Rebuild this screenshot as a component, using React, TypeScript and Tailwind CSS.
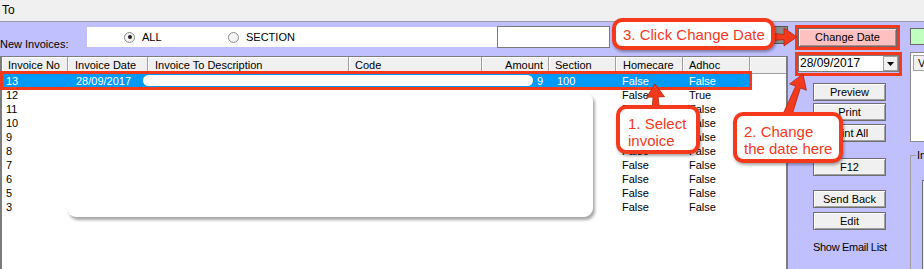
import React from 'react';

const RED = '#f5391c';

const cols = [
    { title: 'Invoice No', w: 'w-[66px]', pad: 'pl-[6px]' },
    { title: 'Invoice Date', w: 'w-[80px]', pad: 'pl-[7px]' },
    { title: 'Invoice To Description', w: 'w-[201px]', pad: 'pl-[7px]' },
    { title: 'Code', w: 'w-[133px]', pad: 'pl-[6px]' },
    { title: 'Amount', w: 'w-[67px]', pad: 'pr-[5px] justify-end' },
    { title: 'Section', w: 'w-[67px]', pad: 'pl-[6px]' },
    { title: 'Homecare', w: 'w-[67px]', pad: 'pl-[7px]' },
    { title: 'Adhoc', w: 'w-[67px]', pad: 'pl-[6px]' },
];

const rows = [
    { no: '13', date: '28/09/2017', amount: '9', section: '100', home: 'False', adhoc: 'False', sel: true },
    { no: '12', home: 'False', adhoc: 'True' },
    { no: '11', home: 'False', adhoc: 'False' },
    { no: '10', home: 'False', adhoc: 'False' },
    { no: '9', home: 'False', adhoc: 'False' },
    { no: '8', home: 'False', adhoc: 'False' },
    { no: '7', home: 'False', adhoc: 'False' },
    { no: '6', home: 'False', adhoc: 'False' },
    { no: '5', home: 'False', adhoc: 'False' },
    { no: '3', home: 'False', adhoc: 'False' },
];

// tapered arrow polygon from base to tip
function arrowPoints(bx: number, by: number, tx: number, ty: number, ws: number, wt: number, wh: number, hl: number) {
    const len = Math.hypot(tx - bx, ty - by);
    const dx = (tx - bx) / len;
    const dy = (ty - by) / len;
    const nx = -dy;
    const ny = dx;
    const kx = tx - dx * hl;
    const ky = ty - dy * hl;
    const p = (x: number, y: number) => `${x.toFixed(1)},${y.toFixed(1)}`;
    return [
        p(bx + nx * ws / 2, by + ny * ws / 2),
        p(kx + nx * wt / 2, ky + ny * wt / 2),
        p(kx + nx * wh / 2, ky + ny * wh / 2),
        p(tx, ty),
        p(kx - nx * wh / 2, ky - ny * wh / 2),
        p(kx - nx * wt / 2, ky - ny * wt / 2),
        p(bx - nx * ws / 2, by - ny * ws / 2),
    ].join(' ');
}

function WinButton({ label, className = '' }: { label: string; className?: string }) {
    return (
        <div className={`flex h-[18px] w-[73px] items-center justify-center border border-[#6e6e6e] bg-[#f0f0f0] shadow-[inset_1px_1px_0_#ffffff,inset_-1px_-1px_0_#a0a0a0] ${className}`}>
            {label}
        </div>
    );
}

function Radio({ label, checked }: { label: string; checked?: boolean }) {
    return (
        <div className="flex items-center gap-[7px]">
            <div className="flex h-[11px] w-[11px] items-center justify-center rounded-full border border-[#8c8c8c] bg-[#f4f4f4]">
                {checked && <div className="h-[4px] w-[4px] rounded-full bg-[#222]" />}
            </div>
            <span>{label}</span>
        </div>
    );
}

function Callout({ className, lines }: { className: string; lines: string[] }) {
    return (
        <div className={`absolute rounded-[10px] border-[4px] border-[#f5391c] bg-white font-['Liberation_Sans',Arial,sans-serif] text-[15px] leading-[17px] text-[#f0391e] shadow-[1px_2px_3px_rgba(0,0,0,0.35)] ${className}`}>
            {lines.map(l => (
                <div key={l}>{l}</div>
            ))}
        </div>
    );
}

export default function App() {
    return (
        <div className="relative h-[269px] w-[924px] overflow-hidden bg-[#f0f0f0] font-['Liberation_Sans',Arial,sans-serif] text-[11px] leading-[13px] text-black">
            {/* title strip */}
            <div className="h-[22px] border-b border-[#9a9aa8] pl-[2px] pt-[4px] text-[12px] leading-[13px]">To</div>

            <div className="flex h-[247px] bg-[#c0c0ff]">
                {/* left: filter bar + grid */}
                <div className="flex w-[788px] flex-col">
                    <div className="flex h-[34px] items-start pt-[5px]">
                        <div className="w-[87px] pt-[11px]">New Invoices:</div>
                        <div className="flex h-[20px] w-[410px] items-center bg-white pl-[37px]">
                            <div className="w-[104px]">
                                <Radio label="ALL" checked />
                            </div>
                            <Radio label="SECTION" />
                        </div>
                        <div className="-mt-[1px] h-[22px] w-[113px] border border-[#7a7a7a] bg-white" />
                        <div className="-mt-[1px] ml-[163px] h-[18px] w-[15px] border border-[#555] bg-[#8c8c8c]" />
                    </div>

                    <div className="flex-1 border-l-2 border-r-2 border-t border-[#7c7c7c] bg-white">
                        <div className="flex h-[17px] border-b border-[#a0a0a0] bg-[#f0f0f0]">
                            {cols.map(c => (
                                <div key={c.title} className={`flex items-center border-r border-[#a0a0a0] shadow-[inset_1px_1px_0_#ffffff] ${c.w} ${c.pad}`}>
                                    {c.title}
                                </div>
                            ))}
                            <div className="flex-1 shadow-[inset_1px_1px_0_#ffffff]" />
                        </div>

                        {rows.map(r => (
                            <div key={r.no} className={`flex h-[14px] w-[748px] items-center ${r.sel ? 'bg-[#0399f7] text-white' : ''}`}>
                                <div className="w-[66px] pl-[4px]">{r.no}</div>
                                <div className="w-[80px] pl-[8px]">{r.date ?? ''}</div>
                                <div className="w-[201px]" />
                                <div className="w-[133px]" />
                                <div className="w-[67px] pr-[6px] text-right">{r.amount ?? ''}</div>
                                <div className="w-[67px] pl-[8px]">{r.section ?? ''}</div>
                                <div className="w-[67px] pl-[6px]">{r.home}</div>
                                <div className="w-[67px] pl-[6px]">{r.adhoc}</div>
                            </div>
                        ))}
                    </div>
                </div>

                {/* right: buttons */}
                <div className="flex flex-1">
                    <div className="w-[122px] shrink-0 pl-[10px] pt-[6px]">
                        <div className="flex h-[19px] w-[99px] items-center justify-center border border-[#6a6a6a] bg-[#ffc0c0] shadow-[inset_1px_1px_0_#ffe6e6,inset_-1px_-1px_0_#b08a8a]">
                            Change Date
                        </div>
                        <div className="mt-[8px] flex h-[17px] w-[101px] items-center border border-[#7a7a7a] bg-white">
                            <span className="flex-1 pl-[1px] text-[12px]">28/09/2017</span>
                            <div className="flex h-[15px] w-[15px] items-center justify-center border border-[#a0a0a0] bg-[#f0f0f0]">
                                <svg width="7" height="4" viewBox="0 0 7 4">
                                    <path d="M0 0 H7 L3.5 4 Z" fill="#000" />
                                </svg>
                            </div>
                        </div>
                        <div className="ml-[15px] mt-[11px] flex flex-col">
                            <WinButton label="Preview" />
                            <WinButton label="Print" className="mt-[2px]" />
                            <WinButton label="Print All" className="mt-[3px]" />
                            <WinButton label="F12" className="mt-[16px]" />
                            <WinButton label="Send Back" className="mt-[14px]" />
                            <WinButton label="Edit" className="mt-[4px]" />
                            <div className="mt-[11px] whitespace-nowrap tracking-[-0.3px]">Show Email List</div>
                        </div>
                    </div>
                    <div className="w-[40px] shrink-0 pt-[6px]">
                        <div className="h-[17px] w-[40px] border border-[#6a6a6a] bg-[#c0ffc0]" />
                        <div className="mt-[7px] h-[90px] border border-[#8a8a8a] bg-white p-[2px]">
                            <div className="h-[16px] border border-[#a0a0a0] bg-[#f0f0f0] pl-[4px] leading-[14px]">V</div>
                        </div>
                        <div className="mt-[13px] h-[120px] border-l border-t border-[#a0a0a0]">
                            <div className="-mt-[7px] ml-[5px] w-fit bg-[#c0c0ff] px-[1px]">In</div>
                            <div className="ml-[11px] mt-[18px] h-[100px] border border-[#6a6a6a] bg-[#f0f0f0]" />
                        </div>
                    </div>
                </div>
            </div>

            {/* redactions */}
            <div className="absolute left-[143px] top-[75px] h-[11px] w-[390px] rounded-full bg-white" />
            <div className="absolute left-[67px] top-[92px] h-[125px] w-[526px] rounded-[9px] bg-white shadow-[2px_3px_3px_rgba(0,0,0,0.35)]" />

            {/* highlight boxes */}
            <div className="absolute left-0 top-[71px] h-[19px] w-[752px] border-[3px] border-[#f5391c]" />
            <div className="absolute left-[795px] top-[25px] h-[25px] w-[105px] border-[3px] border-[#f5391c]" />
            <div className="absolute left-[795px] top-[52px] h-[24px] w-[107px] border-[3px] border-[#f5391c]" />

            {/* arrows */}
            <svg className="pointer-events-none absolute left-0 top-0" width="924" height="269">
                <polygon points={arrowPoints(656, 112, 655, 84, 8, 5, 18, 13)} fill={RED} stroke="#a82a12" strokeWidth="0.8" />
                <polygon points={arrowPoints(787, 116, 803, 74, 9, 5, 18, 14)} fill={RED} stroke="#a82a12" strokeWidth="0.8" />
                <polygon points={arrowPoints(768, 37, 797, 37, 8, 5, 18, 13)} fill={RED} stroke="#a82a12" strokeWidth="0.8" />
            </svg>

            {/* callouts */}
            <Callout className="left-[612px] top-[18px] flex h-[32px] w-[163px] items-center pl-[7px]" lines={['3. Click Change Date']} />
            <Callout className="left-[616px] top-[105px] h-[49px] w-[84px] pl-[8px] pt-[6px]" lines={['1. Select', 'invoice']} />
            <Callout className="left-[733px] top-[112px] h-[51px] w-[110px] pl-[7px] pt-[7px]" lines={['2. Change', 'the date here']} />
        </div>
    );
}
